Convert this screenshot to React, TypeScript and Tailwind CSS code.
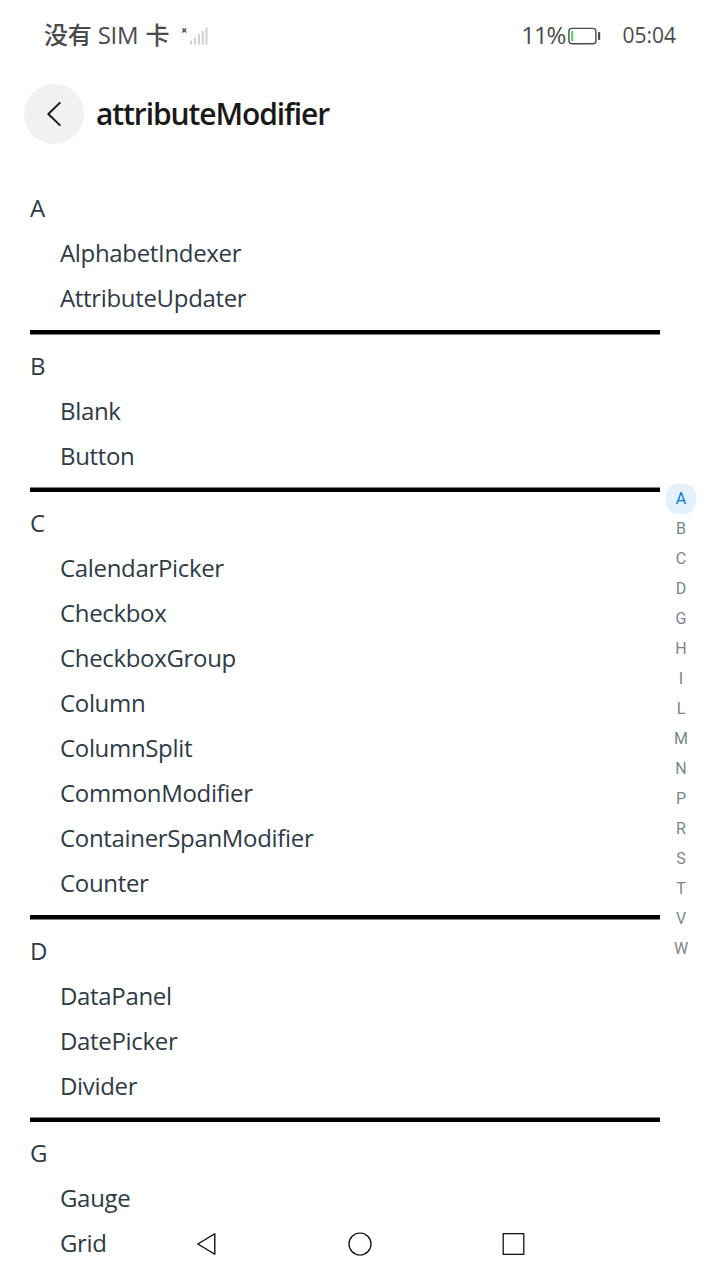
import React from 'react';

type Group = { letter: string; items: string[] };

const groups: Group[] = [
  { letter: 'A', items: ['AlphabetIndexer', 'AttributeUpdater'] },
  { letter: 'B', items: ['Blank', 'Button'] },
  {
    letter: 'C',
    items: [
      'CalendarPicker',
      'Checkbox',
      'CheckboxGroup',
      'Column',
      'ColumnSplit',
      'CommonModifier',
      'ContainerSpanModifier',
      'Counter',
    ],
  },
  { letter: 'D', items: ['DataPanel', 'DatePicker', 'Divider'] },
  { letter: 'G', items: ['Gauge', 'Grid'] },
];

const letters = 'ABCDGHILMNPRSTVW'.split('');

function StatusBar() {
  return (
    <header className="flex h-[72px] shrink-0 items-center pr-11 pl-11 text-[#4a4a4a]">
      <span className="pb-[2px] font-['Open_Sans','Noto_Sans_CJK_SC',sans-serif] text-2xl leading-9 tracking-[-0.2px] whitespace-nowrap">
        <span className="font-medium">没有</span> SIM <span className="ml-[1px] font-medium">卡</span>
      </span>
      <svg className="ml-3 h-5 w-7" viewBox="0 0 28 20" fill="none">
        <path d="M1.3 2.6l4 4M5.3 2.6l-4 4" stroke="#4a4a4a" strokeWidth="1.4" />
        <path
          d="M10 15.3v2.5M14 12.3v5.5M18 8.8v9M21.8 5.8v12M25.5 2.5v15.3"
          stroke="#d2d2d2"
          strokeWidth="2.2"
          strokeLinecap="round"
        />
      </svg>
      <div className="ml-auto flex items-center">
        <span className="pb-[2px] font-['Open_Sans',sans-serif] text-2xl leading-9 tracking-[-1px]">11%</span>
        <svg className="ml-[3px] h-[18px] w-[33px]" viewBox="0 0 33 18" fill="none">
          <rect x="0.9" y="1.4" width="27" height="15.4" rx="3" stroke="#4a4a4a" strokeWidth="1.4" />
          <rect x="3" y="4" width="2.3" height="10" fill="#64d673" />
          <rect x="30" y="5" width="2.2" height="8" rx="0.8" fill="#4a4a4a" />
        </svg>
        <span className="ml-[21px] pb-[2px] font-['Open_Sans',sans-serif] text-[21px] leading-9">05:04</span>
      </div>
    </header>
  );
}

function TitleBar() {
  return (
    <div className="flex h-[84px] shrink-0 items-center gap-3 px-6">
      <button type="button" aria-label="Back" className="flex size-[60px] items-center justify-center rounded-full bg-[#f1f1f1]">
        <svg className="size-9" viewBox="0 0 36 36" fill="none">
          <path
            d="M23.8 6.9L12.3 18l11.5 11.1"
            stroke="#191919"
            strokeWidth="2"
            strokeLinecap="round"
            strokeLinejoin="round"
          />
        </svg>
      </button>
      <h1 className="font-['Open_Sans',sans-serif] text-[30px] leading-10 font-semibold tracking-[-1.1px] text-[#191919]">
        attributeModifier
      </h1>
    </div>
  );
}

function Divider({ half }: { half: boolean }) {
  return (
    <div className={half ? 'h-[22.5px] pt-[8px]' : 'h-[22.5px] pt-[9px]'}>
      <div className={half ? 'h-[5px] border-t border-[#808080] bg-black' : 'h-[5px] border-b border-[#808080] bg-black'} />
    </div>
  );
}

export default function App() {
  return (
    <div className="relative flex h-[1280px] w-[720px] flex-col overflow-hidden bg-white font-['Open_Sans','Noto_Sans_CJK_SC',sans-serif]">
      <StatusBar />
      <TitleBar />
      <div className="flex min-h-0 flex-1">
        <main className="w-[660px] overflow-hidden pt-[30px] pl-[30px] text-2xl tracking-[-0.33px] text-[#2f3a46]">
          {groups.map((group, index) => (
            <section key={group.letter}>
              <h2 className="h-[45px] leading-[43px]">{group.letter}</h2>
              <ul>
                {group.items.map((item) => (
                  <li key={item} className="h-[45px] pl-[30px] leading-[43px]">
                    {item}
                  </li>
                ))}
              </ul>
              {index < groups.length - 1 && <Divider half={index % 2 === 1} />}
            </section>
          ))}
        </main>
        <nav className="flex flex-col pt-[328px] pl-[6px] font-['Roboto',sans-serif] text-base leading-6">
          {letters.map((letter) => (
            <span
              key={letter}
              className={
                letter === 'A'
                  ? 'flex size-[30px] items-center justify-center rounded-xl bg-[#e3f1ff] text-[#0a7aea]'
                  : 'flex size-[30px] items-center justify-center text-[#7d858c]'
              }
            >
              {letter}
            </span>
          ))}
        </nav>
      </div>
      <div className="absolute inset-x-0 bottom-0 flex h-[72px] items-center">
        <svg className="ml-[194px] size-6" viewBox="0 0 24 24" fill="none" stroke="#000" strokeWidth="1.3">
          <path d="M20.8 1.8v20.4L3.8 12z" strokeLinejoin="round" />
        </svg>
        <svg className="ml-[130px] size-6" viewBox="0 0 24 24" fill="none" stroke="#000" strokeWidth="1.2">
          <circle cx="12" cy="12" r="11" />
        </svg>
        <svg className="ml-[129px] size-6" viewBox="0 0 24 24" fill="none" stroke="#000" strokeWidth="1.2">
          <rect x="2.2" y="1.7" width="20.6" height="20.6" />
        </svg>
      </div>
    </div>
  );
}
